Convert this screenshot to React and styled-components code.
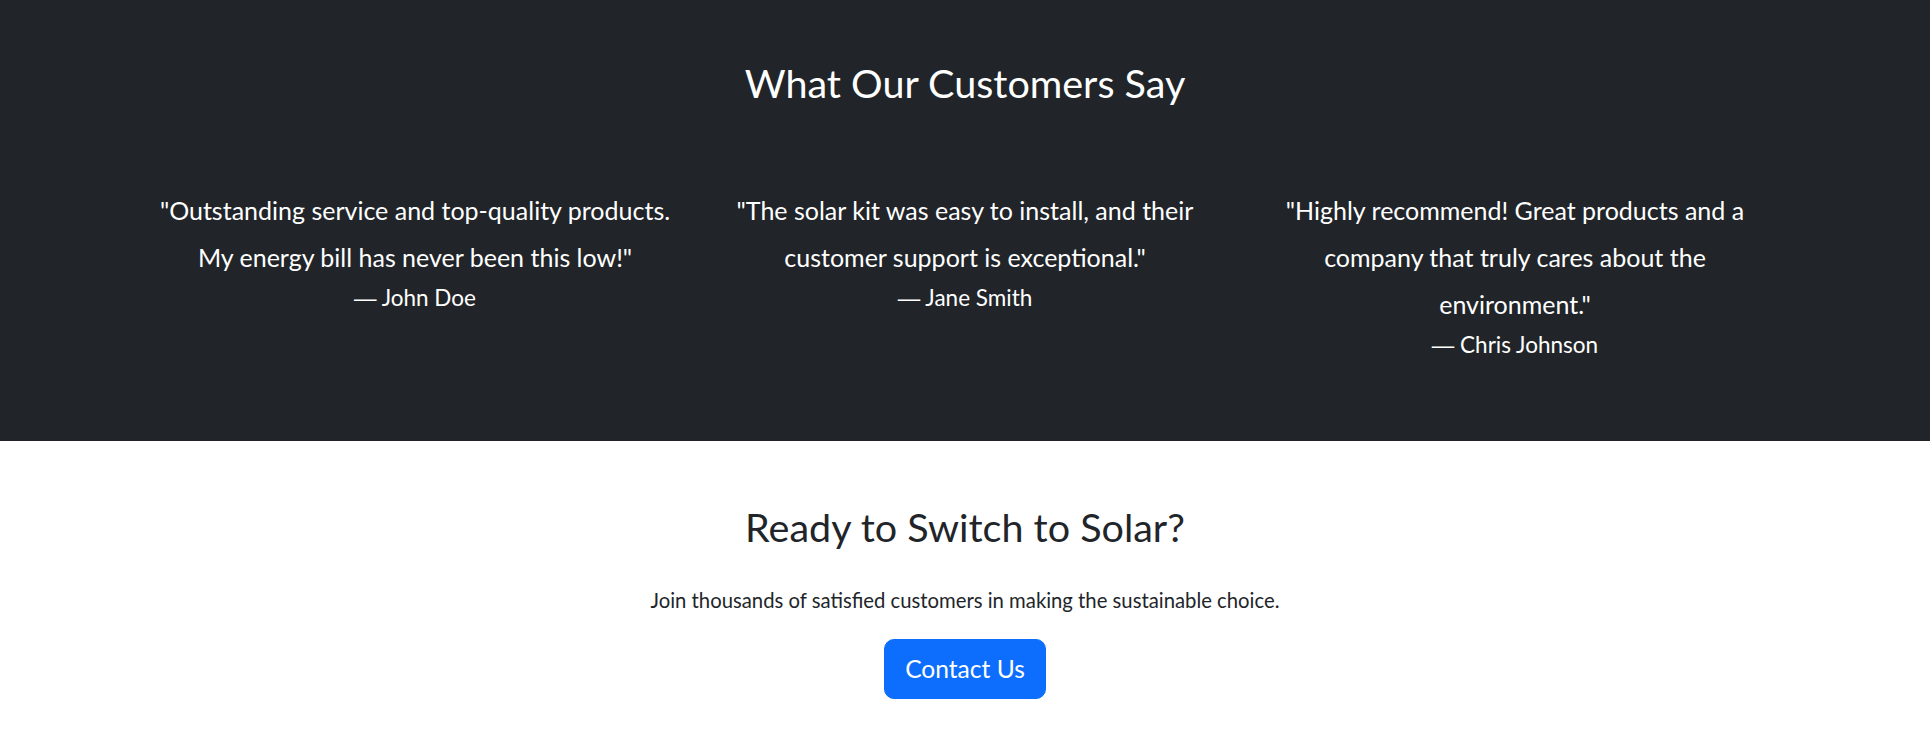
import React from "react";
import styled, { createGlobalStyle } from "styled-components";

const GlobalStyle = createGlobalStyle`
  *, *::before, *::after { box-sizing: border-box; }
  body {
    margin: 0;
    font-family: Lato, "Noto Sans", sans-serif;
    font-size: 20px;
    line-height: 1.5;
    color: #212529;
    background: #fff;
  }
`;

const DarkSection = styled.section`
  background: #212529;
  color: #fff;
  padding: 59px 0 78px;
`;

const LightSection = styled.section`
  background: #fff;
  color: #212529;
  padding: 62px 0 60px;
  text-align: center;
`;

const Container = styled.div`
  width: 100%;
  max-width: 1650px;
  margin: 0 auto;
  padding: 0 15px;
`;

const Heading = styled.h2`
  margin: 0 0 ${(p) => p.$gap}px;
  font-size: 39.5px;
  font-weight: 400;
  line-height: 48px;
  text-align: center;
`;

const Row = styled.div`
  display: grid;
  grid-template-columns: repeat(3, 1fr);
  margin: 0 -15px;
`;

const Testimonial = styled.figure`
  margin: 0;
  padding: 0 15px;
  text-align: center;
`;

const Quote = styled.blockquote`
  margin: 0;
  font-size: 25px;
  line-height: 47px;
`;

const Author = styled.figcaption`
  margin: 0;
  font-size: 22.5px;
  line-height: 34px;
`;

const Dash = styled.span`
  font-family: "Liberation Sans", Arial, sans-serif;
`;

const Lead = styled.p`
  margin: 0 0 24px;
  font-size: 20.3px;
  line-height: 30px;
`;

const Button = styled.a`
  display: inline-block;
  padding: 10px 20px;
  border: 1px solid #0d6efd;
  border-radius: 10px;
  background: #0d6efd;
  color: #fff;
  font-size: 24.6px;
  line-height: 37.5px;
  text-decoration: none;
  cursor: pointer;
`;

const testimonials = [
  {
    quote: "\"Outstanding service and top-quality products. My energy bill has never been this low!\"",
    author: "John Doe",
  },
  {
    quote: "\"The solar kit was easy to install, and their customer support is exceptional.\"",
    author: "Jane Smith",
  },
  {
    quote: "\"Highly recommend! Great products and a company that truly cares about the environment.\"",
    author: "Chris Johnson",
  },
];

export default function App() {
  return (
    <>
      <GlobalStyle />
      <DarkSection>
        <Container>
          <Heading $gap={80}>What Our Customers Say</Heading>
          <Row>
            {testimonials.map((t) => (
              <Testimonial key={t.author}>
                <Quote>{t.quote}</Quote>
                <Author>
                  <Dash>—</Dash> {t.author}
                </Author>
              </Testimonial>
            ))}
          </Row>
        </Container>
      </DarkSection>
      <LightSection>
        <Container>
          <Heading $gap={34}>Ready to Switch to Solar?</Heading>
          <Lead>Join thousands of satisfied customers in making the sustainable choice.</Lead>
          <Button href="#contact">Contact Us</Button>
        </Container>
      </LightSection>
    </>
  );
}
